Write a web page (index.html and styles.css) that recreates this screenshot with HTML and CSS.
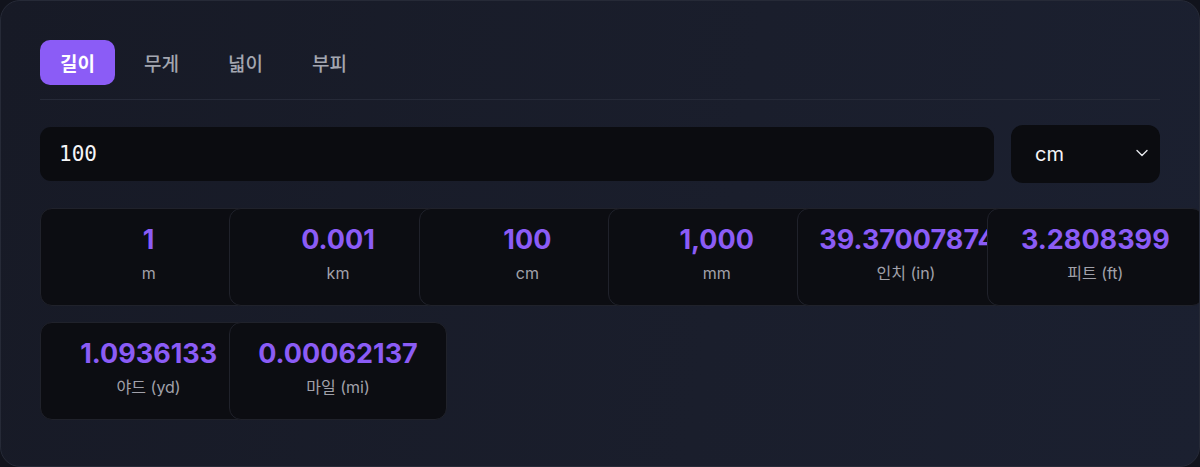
FILE: index.html
```html
<!DOCTYPE html>
<html lang="ko">
<head>
<meta charset="utf-8">
<title>단위 변환기</title>
<link rel="stylesheet" href="styles.css">
</head>
<body>
<div class="panel">
  <div class="tabs">
    <button class="tab active">길이</button>
    <button class="tab">무게</button>
    <button class="tab">넓이</button>
    <button class="tab">부피</button>
  </div>
  <div class="input-row">
    <div class="num-input">100</div>
    <div class="unit-select">
      <span>cm</span>
      <svg class="chev" width="12" height="8" viewBox="0 0 12 8"><path d="M1 1.5 L6 6.5 L11 1.5" fill="none" stroke="#e5e7eb" stroke-width="1.4" stroke-linecap="round" stroke-linejoin="round"/></svg>
    </div>
  </div>
  <div class="results">
    <div class="card"><div class="val">1</div><div class="lbl">m</div></div>
    <div class="card"><div class="val">0.001</div><div class="lbl">km</div></div>
    <div class="card"><div class="val">100</div><div class="lbl">cm</div></div>
    <div class="card"><div class="val">1,000</div><div class="lbl">mm</div></div>
    <div class="card"><div class="val">39.37007874</div><div class="lbl">인치 (in)</div></div>
    <div class="card"><div class="val">3.2808399</div><div class="lbl">피트 (ft)</div></div>
    <div class="card"><div class="val">1.0936133</div><div class="lbl">야드 (yd)</div></div>
    <div class="card"><div class="val">0.00062137</div><div class="lbl">마일 (mi)</div></div>
  </div>
</div>
</body>
</html>
```

FILE: styles.css
```css
html, body {
  margin: 0;
  padding: 0;
  background: #11131c;
  overflow: hidden;
}
body {
  width: 1200px;
  height: 467px;
  font-family: Inter, "Noto Sans CJK KR", sans-serif;
}
.panel {
  box-sizing: border-box;
  width: 1200px;
  height: 467px;
  padding: 39px;
  border: 1px solid #262a37;
  border-radius: 20px;
  background: linear-gradient(100deg, #171a26 0%, #1a1e2c 60%, #1b2030 100%);
  overflow: hidden;
}
.tabs {
  display: flex;
  gap: 9px;
  padding-bottom: 14px;
  border-bottom: 1px solid #262a38;
}
.tab {
  font-family: "Noto Sans CJK KR", sans-serif;
  font-size: 19px;
  font-weight: 500;
  line-height: 25px;
  padding: 10px 20px;
  border: none;
  border-radius: 10px;
  background: transparent;
  color: #a3a6b0;
}
.tab.active {
  background: #8b5cf6;
  color: #ffffff;
  font-weight: 700;
}
.input-row {
  display: flex;
  align-items: center;
  gap: 17px;
  margin-top: 25px;
}
.num-input {
  flex: 1;
  height: 54px;
  box-sizing: border-box;
  display: flex;
  align-items: center;
  padding: 0 19px;
  background: #0b0c10;
  border-radius: 11px;
  font-family: "DejaVu Sans Mono", monospace;
  font-size: 21px;
  font-weight: 400;
  color: #f5f5f7;
}
.unit-select {
  width: 149px;
  height: 58px;
  box-sizing: border-box;
  display: flex;
  align-items: center;
  justify-content: space-between;
  padding: 0 12px 0 24px;
  background: #0b0c10;
  border-radius: 12px;
  font-size: 20px;
  color: #f5f5f7;
}
.chev {
  margin-top: -2px;
}
.results {
  display: grid;
  grid-template-columns: repeat(6, minmax(0, 1fr));
  gap: 16px;
  margin-top: 25px;
}
.card {
  position: relative;
  width: 100%;
  padding: 15px 21px 20px;
  border: 1px solid #20222b;
  border-radius: 12px;
  background: #0c0d12;
  text-align: center;
}
.val {
  font-size: 27px;
  font-weight: 700;
  line-height: 32px;
  color: #8b5cf6;
  white-space: nowrap;
}
.lbl {
  margin-top: 5px;
  font-size: 16px;
  line-height: 24px;
  color: #a1a1aa;
  white-space: nowrap;
}
```
